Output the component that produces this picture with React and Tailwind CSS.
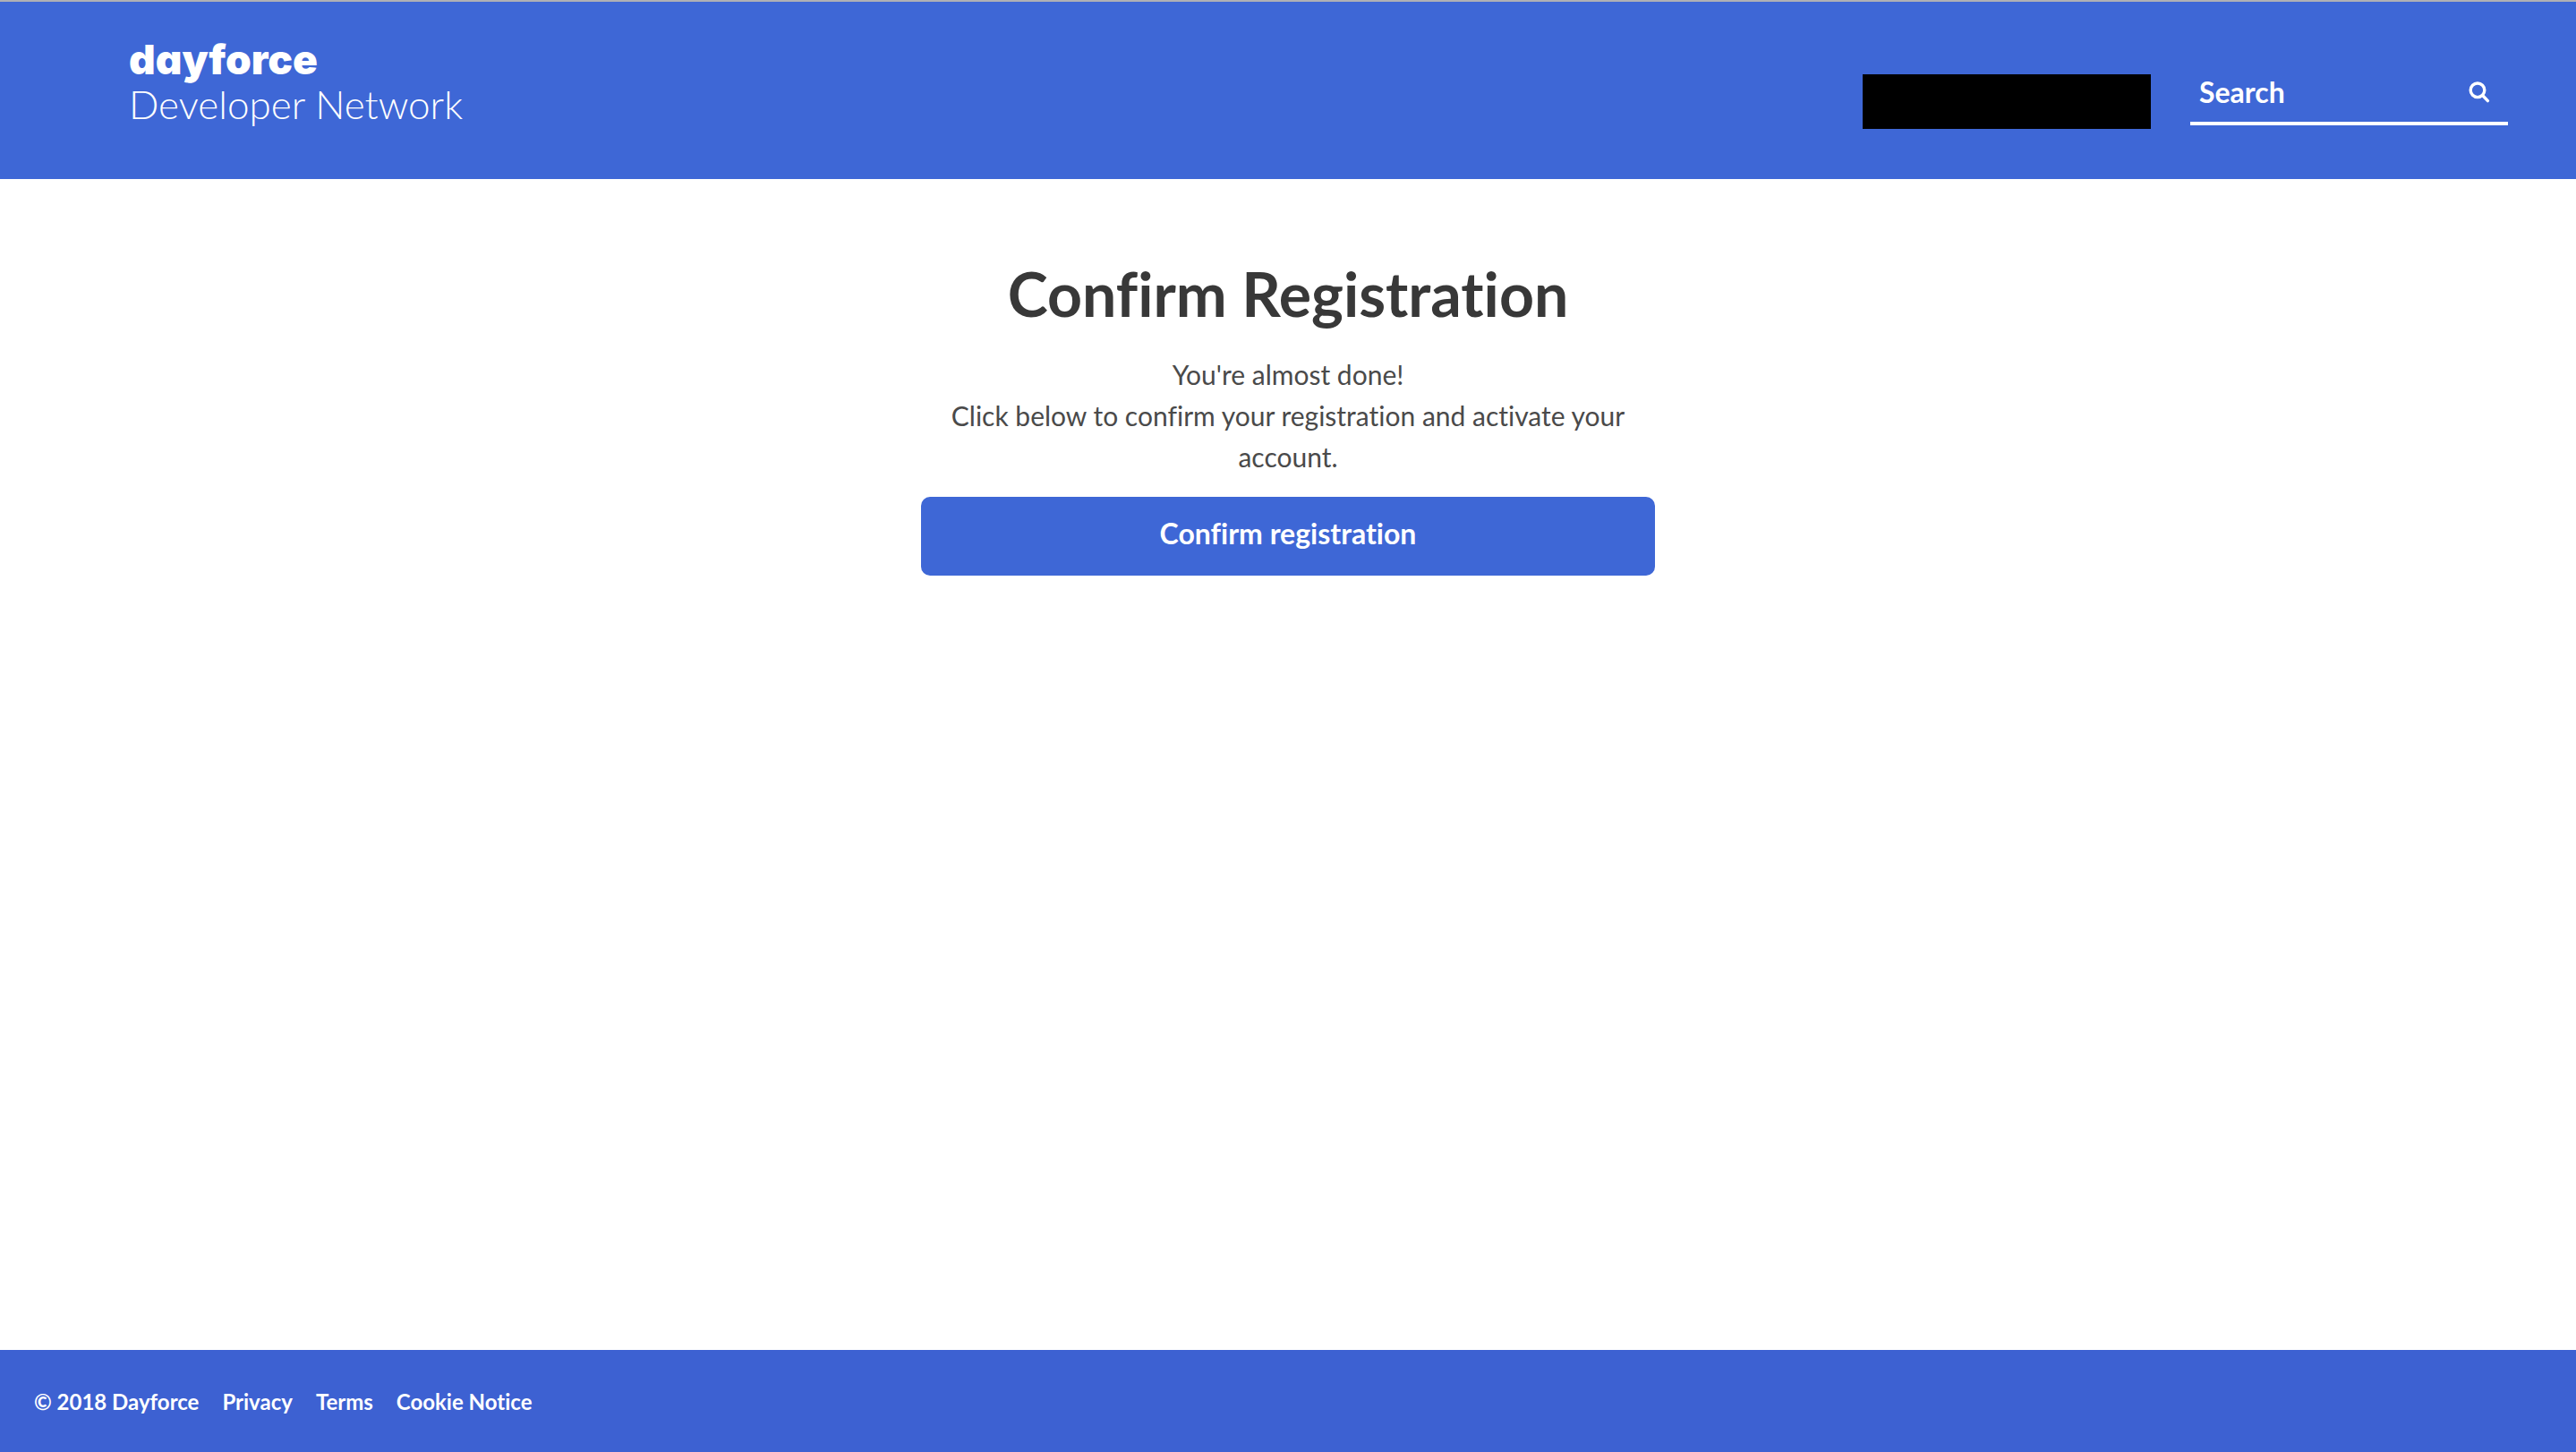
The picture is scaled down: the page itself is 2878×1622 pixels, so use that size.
function SearchIcon() {
  return (
    <svg viewBox="0 0 24 24" className="size-6" fill="none" stroke="currentColor" strokeWidth="3.4" strokeLinecap="round" aria-hidden="true">
      <circle cx="10" cy="9.8" r="7.8" />
      <path d="M15.8 15.8 L21.4 21.6" />
    </svg>
  );
}

export default function App() {
  return (
    <div className="flex min-h-screen flex-col bg-white font-['Lato','Open_Sans',sans-serif] text-[#4a4a4a] [font-variant-ligatures:no-common-ligatures]">
      <header className="flex h-[200px] items-start justify-between border-t-2 border-[#afb0b5] bg-[#3e67d6] pr-[76px] pl-[144px] text-white">
        <a href="#home" className="mt-[38px] flex flex-col">
          <span className="text-[46px] leading-[52px] font-black font-['Inter',sans-serif] [font-feature-settings:'cv11']">dayforce</span>
          <span className="text-[44px] leading-[48px] font-light">Developer Network</span>
        </a>
        <div className="flex items-start">
          <div className="mt-[81px] mr-11 h-[61px] w-[322px] bg-black" />
          <form className="mt-[67px] flex h-[71px] w-[355px] items-center border-b-4 border-white px-[10px]" onSubmit={(e) => e.preventDefault()}>
            <input
              type="text"
              aria-label="Search"
              placeholder="Search"
              className="min-w-0 flex-1 bg-transparent text-[32px] leading-[46px] font-bold text-white outline-none placeholder:text-white placeholder:opacity-100"
            />
            <button type="submit" aria-label="Submit search" className="mr-[10px]">
              <SearchIcon />
            </button>
          </form>
        </div>
      </header>

      <main className="flex-1 px-8 pt-[88px]">
        <div className="mx-auto flex max-w-[820px] flex-col text-center">
          <h1 className="text-[68px] leading-[80px] font-bold text-[#383838]">Confirm Registration</h1>
          <p className="mt-[27px] text-[30px] leading-[46px]">
            You're almost done!
            <br />
            Click below to confirm your registration and activate your account.
          </p>
          <button type="button" className="mt-[22px] h-[88px] rounded-[10px] bg-[#3e67d6] pb-[6px] text-[32px] leading-[46px] font-bold text-white">
            Confirm registration
          </button>
        </div>
      </main>

      <footer className="flex h-[114px] items-center gap-[26px] bg-[#3d61d2] px-[38px] pt-[2px] text-[24px] leading-8 font-bold text-white">
        <span>© 2018 Dayforce</span>
        <a href="#privacy">Privacy</a>
        <a href="#terms">Terms</a>
        <a href="#cookies">Cookie Notice</a>
      </footer>
    </div>
  );
}
